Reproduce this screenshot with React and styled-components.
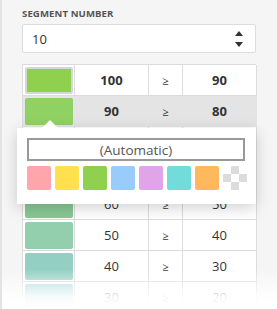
import React from 'react';
import styled, { createGlobalStyle } from 'styled-components';

const GlobalStyle = createGlobalStyle`
  html, body {
    margin: 0;
    padding: 0;
    background: #f5f5f5;
  }
  body {
    font-family: "Open Sans", "Noto Sans", sans-serif;
  }
`;

const Panel = styled.div`
  position: relative;
  width: 277px;
  height: 309px;
  overflow: hidden;
  box-sizing: border-box;
  padding: 7px 21px 0 20px;
  background: #f5f5f5;
  border-left: 2px solid #e3e3e3;
`;

const Label = styled.div`
  font-size: 9.6px;
  font-weight: 700;
  color: #555;
  letter-spacing: 0.1px;
  line-height: 14px;
  margin-bottom: 3px;
`;

const Spin = styled.div`
  display: flex;
  align-items: center;
  justify-content: space-between;
  height: 29px;
  box-sizing: border-box;
  background: #fff;
  border: 1px solid #dcdcdc;
  border-radius: 2px;
  padding: 0 12px 0 9px;
  font-size: 13px;
  color: #333;
  margin-bottom: 11px;
`;

const Arrows = styled.div`
  display: flex;
  flex-direction: column;
  gap: 6px;
`;

const Grid = styled.div`
  display: grid;
  grid-template-columns: 52px 74px 34px 74px;
  background: #fff;
  border-top: 1px solid #dcdcdc;
  border-left: 1px solid #dcdcdc;
`;

const Cell = styled.div`
  height: 31px;
  box-sizing: border-box;
  display: flex;
  align-items: center;
  justify-content: center;
  border-right: 1px solid ${(p) => (p.$active ? '#e4e4e4' : '#dcdcdc')};
  border-bottom: 1px solid ${(p) => (p.$active ? '#e4e4e4' : '#dcdcdc')};
  background: ${(p) => (p.$active ? '#e4e4e4' : '#fff')};
  font-size: 13px;
  font-weight: ${(p) => (p.$bold ? 700 : 400)};
  color: #333;
`;

const SwatchCell = styled(Cell)`
  padding: 1px;
`;

const Chip = styled.div`
  width: ${(p) => (p.$framed ? '44px' : '48px')};
  height: ${(p) => (p.$framed ? '23px' : '27px')};
  border-radius: 2px;
  border: ${(p) => (p.$framed ? '2px solid #d6d6d6' : 'none')};
`;

const Sign = styled.span`
  font-size: 11px;
  font-weight: 400;
  color: #333;
`;

const Popup = styled.div`
  position: absolute;
  left: 15px;
  top: 128px;
  width: 239px;
  height: 76px;
  box-sizing: border-box;
  background: #fff;
  box-shadow: 0 4px 14px rgba(0, 0, 0, 0.18);
  padding: 10px 9px 0 10px;

  &::before {
    content: '';
    position: absolute;
    left: 25px;
    top: -8px;
    border-left: 8px solid transparent;
    border-right: 8px solid transparent;
    border-bottom: 8px solid #fff;
  }
`;

const AutoButton = styled.div`
  height: 23px;
  box-sizing: border-box;
  border: 2px solid #999;
  display: flex;
  align-items: center;
  justify-content: center;
  font-size: 13.5px;
  color: #555;
  width: 218px;
  margin-bottom: 5px;
`;

const Palette = styled.div`
  display: grid;
  grid-template-columns: repeat(8, 24px);
  gap: 4px;
`;

const Swatch = styled.div`
  width: 24px;
  height: 24px;
  border-radius: 2px;
  background: ${(p) => p.$color};
`;

const Fade = styled.div`
  position: absolute;
  left: 0;
  right: 0;
  bottom: 0;
  height: 40px;
  background: linear-gradient(rgba(255, 255, 255, 0), rgba(255, 255, 255, 0.92) 70%, #fff);
  pointer-events: none;
`;

const rows = [
  { from: 100, to: 90, color: '#8fd14f', bold: true, framed: true },
  { from: 90, to: 80, color: '#8fd163', bold: true, active: true },
  { from: 80, to: 70, color: '#8ed070' },
  { from: 70, to: 60, color: '#8dcd82' },
  { from: 60, to: 50, color: '#88c894' },
  { from: 50, to: 40, color: '#93cead' },
  { from: 40, to: 30, color: '#93cfc2' },
  { from: 30, to: 20, color: '#a8d8de' },
];

const palette = ['#ffa5ab', '#ffe150', '#8fd14f', '#99cbfb', '#e0a5e8', '#72dcdb', '#ffb95c'];

function SpinArrows() {
  return (
    <Arrows>
      <svg width="8" height="5" viewBox="0 0 8 5">
        <path d="M4 0 L8 5 L0 5 Z" fill="#333" />
      </svg>
      <svg width="8" height="5" viewBox="0 0 8 5">
        <path d="M0 0 L8 0 L4 5 Z" fill="#333" />
      </svg>
    </Arrows>
  );
}

function Checker() {
  const squares = [];
  for (let y = 0; y < 3; y++) {
    for (let x = 0; x < 3; x++) {
      if ((x + y) % 2 === 1) {
        squares.push(<rect key={`${x}-${y}`} x={x * 8} y={y * 8} width="8" height="8" fill="#dcdcdc" />);
      }
    }
  }
  return (
    <svg width="24" height="24" viewBox="0 0 24 24">
      <rect width="24" height="24" fill="#fff" />
      {squares}
    </svg>
  );
}

export default function App() {
  return (
    <Panel>
      <GlobalStyle />
      <Label>SEGMENT NUMBER</Label>
      <Spin>
        <span>10</span>
        <SpinArrows />
      </Spin>
      <Grid>
        {rows.map((r) => (
          <React.Fragment key={r.from}>
            <SwatchCell $active={r.active}>
              <Chip $framed={r.framed} style={{ background: r.color }} />
            </SwatchCell>
            <Cell $active={r.active} $bold={r.bold}>{r.from}</Cell>
            <Cell $active={r.active}>
              <Sign>≥</Sign>
            </Cell>
            <Cell $active={r.active} $bold={r.bold}>{r.to}</Cell>
          </React.Fragment>
        ))}
      </Grid>
      <Popup>
        <AutoButton>(Automatic)</AutoButton>
        <Palette>
          {palette.map((c) => (
            <Swatch key={c} $color={c} />
          ))}
          <Checker />
        </Palette>
      </Popup>
      <Fade />
    </Panel>
  );
}
